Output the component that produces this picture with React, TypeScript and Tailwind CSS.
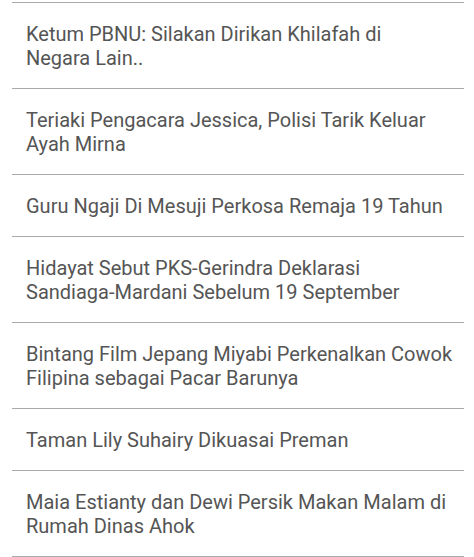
const headlines = [
  ['Ketum PBNU: Silakan Dirikan Khilafah di', 'Negara Lain..'],
  ['Teriaki Pengacara Jessica, Polisi Tarik Keluar', 'Ayah Mirna'],
  ['Guru Ngaji Di Mesuji Perkosa Remaja 19 Tahun'],
  ['Hidayat Sebut PKS-Gerindra Deklarasi', 'Sandiaga-Mardani Sebelum 19 September'],
  ['Bintang Film Jepang Miyabi Perkenalkan Cowok', 'Filipina sebagai Pacar Barunya'],
  ['Taman Lily Suhairy Dikuasai Preman'],
  ['Maia Estianty dan Dewi Persik Makan Malam di', 'Rumah Dinas Ahok'],
];

export default function App() {
  return (
    <div className="min-h-[557px] bg-white pt-[2px] pl-[12px] pr-[10px] font-['Roboto',sans-serif]">
      <ul className="border-t border-[#aaaaaa]">
        {headlines.map((lines) => (
          <li
            key={lines[0]}
            className="border-b border-[#aaaaaa] pt-[19px] pb-[18px] pl-[14px] pr-[6px] text-[20px] leading-[24px] text-[#555555]"
          >
            {lines.map((line) => (
              <span key={line} className="block whitespace-nowrap">
                {line}
              </span>
            ))}
          </li>
        ))}
      </ul>
    </div>
  );
}
